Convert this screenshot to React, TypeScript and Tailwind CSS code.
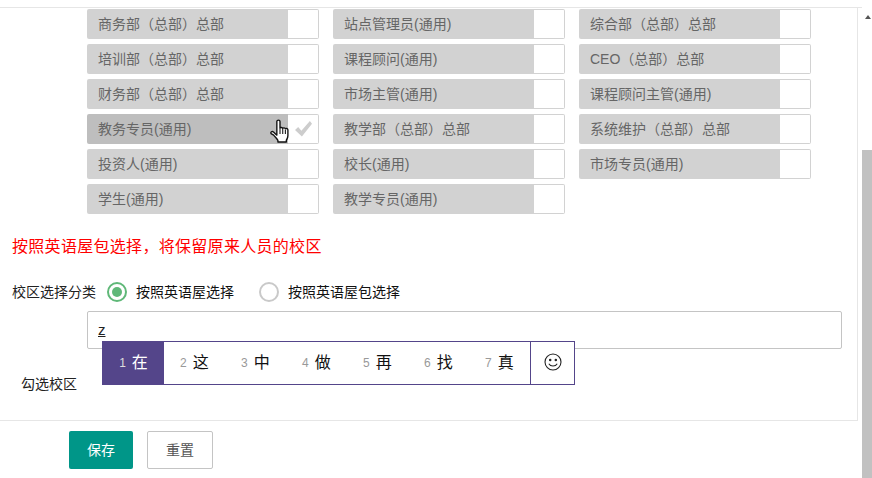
const rows = [
  ["商务部（总部）总部", "站点管理员(通用)", "综合部（总部）总部"],
  ["培训部（总部）总部", "课程顾问(通用)", "CEO（总部）总部"],
  ["财务部（总部）总部", "市场主管(通用)", "课程顾问主管(通用)"],
  ["教务专员(通用)", "教学部（总部）总部", "系统维护（总部）总部"],
  ["投资人(通用)", "校长(通用)", "市场专员(通用)"],
  ["学生(通用)", "教学专员(通用)"],
];

const candidates = ["这", "中", "做", "再", "找", "真"];

function HandCursor() {
  return (
    <svg className="absolute left-[183px] top-[5px]" width="20" height="27" viewBox="0 0 19 25">
      <path
        d="M6.500 2c0-1.700 3-1.700 3 0v6.500c.3-1 2.400-1 2.600.2.4-.9 2.300-.8 2.500.4.4-.7 2.300-.6 2.400.8v5.600c0 2-.8 3-1.500 4.500v1.500H7.500v-1.500c-1-2-2.500-3-4-5L1 13.500c-.7-1.500 1-2.500 2.300-1.500l3.200 3z"
        fill="#fff"
        stroke="#111"
        strokeWidth="1.300"
        strokeLinejoin="round"
      />
      <path d="M9.500 9v5M12.100 9v5M14.600 10v4" stroke="#111" strokeWidth="1" fill="none" />
    </svg>
  );
}

function RoleCell({ name, active, checked }: { name: string; active?: boolean; checked?: boolean }) {
  return (
    <div className="relative flex h-[30px] w-[232px]">
      <div className={`flex flex-1 items-center rounded-l-[2px] pl-[11px] text-[14px] text-[#666] ${active ? "bg-[#bebebe]" : "bg-[#d2d2d2]"}`}>
        {name}
      </div>
      <div className="flex w-[31px] items-center justify-center rounded-r-[2px] border border-l-0 border-[#d2d2d2] bg-white pb-[2px]">
        {checked && (
          <svg width="17" height="17" viewBox="0 0 16 16">
            <path d="M0 9.500l3-3 3 3.500L14 1l2 2.500L6.500 15.500z" fill="#cdcdcd" />
          </svg>
        )}
      </div>
      {active && <HandCursor />}
    </div>
  );
}

function Radio({ checked, label }: { checked?: boolean; label: string }) {
  return (
    <div className="flex items-center">
      <span className={`flex h-[20px] w-[20px] items-center justify-center rounded-full border-2 ${checked ? "border-[#5fb878]" : "border-[#c9c9c9]"}`}>
        {checked && <span className="h-[10px] w-[10px] rounded-full bg-[#5fb878]" />}
      </span>
      <span className="mt-[1px] ml-[9px] text-[14px] text-[#111]">{label}</span>
    </div>
  );
}

export default function App() {
  return (
    <div className="flex h-[478px] w-[872px] overflow-hidden bg-white font-['Liberation_Sans','Noto_Sans_CJK_SC',sans-serif]">
      <div className="w-[862px]">
        <div className="mt-[7px] border-t border-[#e6e6e6]">
          <div className="h-[413px] w-[858px] border-r border-b border-[#e6e6e6]">
            <div className="flex flex-col gap-[5px] pt-[1px] pl-[87px]">
              {rows.map((row, i) => (
                <div key={i} className="flex gap-[14px]">
                  {row.map((name) => (
                    <RoleCell key={name} name={name} active={name === "教务专员(通用)"} checked={name === "教务专员(通用)"} />
                  ))}
                </div>
              ))}
            </div>
            <p className="mt-[23px] pl-[12px] text-[16px] leading-[20px] tracking-[0.3px] text-[#ff0000]">按照英语屋包选择，将保留原来人员的校区</p>
            <div className="mt-[25px] flex h-[20px] items-center pl-[12px]">
              <span className="w-[95px] text-[14px] text-[#222]">校区选择分类</span>
              <Radio checked label="按照英语屋选择" />
              <div className="ml-[25px]">
                <Radio label="按照英语屋包选择" />
              </div>
            </div>
            <div className="relative mt-[9px] ml-[87px] flex h-[38px] w-[755px] items-center rounded-[2px] border border-[#c4c4c4] pl-[10px] text-[15px] text-[#222]">
              <span className="underline">z</span>
              <div className="absolute top-[29px] left-[14px] flex h-[44px] w-[473px] border border-[#54458a] bg-white">
                <div className="flex w-[61px] shrink-0 items-center justify-center gap-[6px] bg-[#54458a] text-white">
                  <span className="text-[12px] text-[#ddd]">1</span>
                  <span className="text-[16px]">在</span>
                </div>
                <div className="flex flex-1 items-center pl-[16px]">
                  {candidates.map((c, i) => (
                    <div key={c} className={`flex shrink-0 items-center gap-[6px] ${i < 5 ? "w-[61px]" : ""}`}>
                      <span className="text-[12px] text-[#999]">{i + 2}</span>
                      <span className="text-[16px] text-[#111]">{c}</span>
                    </div>
                  ))}
                </div>
                <div className="flex w-[44px] shrink-0 items-center justify-center border-l border-[#54458a] pb-[2px]">
                  <svg width="18" height="18" viewBox="0 0 18 18" fill="none" stroke="#222" strokeWidth="1.100">
                    <circle cx="9" cy="9" r="8" />
                    <circle cx="6.200" cy="7" r=".7" fill="#222" />
                    <circle cx="11.800" cy="7" r=".7" fill="#222" />
                    <path d="M4.800 10.800c1.800 3 6.600 3 8.400 0" />
                  </svg>
                </div>
              </div>
            </div>
            <p className="mt-[25px] pl-[21px] text-[14px] leading-[20px] text-[#222]">勾选校区</p>
          </div>
          <div className="mt-[10px] flex gap-[14px] pl-[69px]">
            <button className="h-[38px] w-[64px] rounded-[2px] bg-[#009688] text-[14px] text-white">保存</button>
            <button className="h-[38px] w-[66px] rounded-[2px] border border-[#c4c4c4] bg-white text-[14px] text-[#555]">重置</button>
          </div>
        </div>
      </div>
      <div className="mt-[8px] flex w-[10px] flex-col">
        <div className="h-[142px] pt-[7px] pl-[3px]">
          <div className="h-0 w-0 border-x-[3.500px] border-b-[4px] border-x-transparent border-b-[#555]" />
        </div>
        <div className="flex-1 bg-[#c1c1c1]" />
      </div>
    </div>
  );
}
